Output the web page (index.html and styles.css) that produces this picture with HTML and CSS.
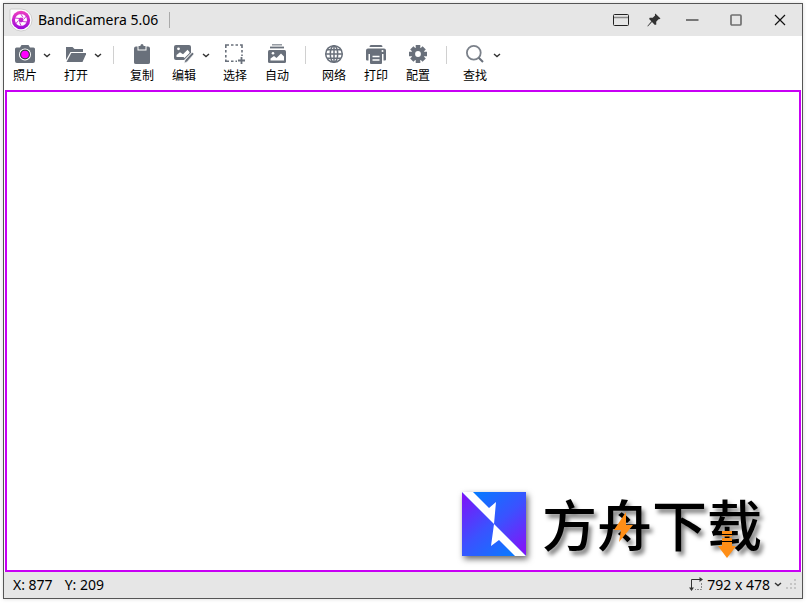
FILE: index.html
```html
<!DOCTYPE html>
<html lang="zh-CN">
<head>
  <meta charset="UTF-8">
  <meta name="viewport" content="width=device-width, initial-scale=1.0">
  <title>BandiCamera 5.06</title>
  <link rel="stylesheet" href="styles.css">
</head>
<body>
  <div class="window">
    <!-- Title bar -->
    <header class="titlebar">
      <svg class="app-icon" width="24" height="24" viewBox="0 0 24 24">
        <defs>
          <linearGradient id="app-grad" x1="0" y1="0" x2="0" y2="1">
            <stop offset="0" stop-color="#f03fc0"/>
            <stop offset="1" stop-color="#9a08dc"/>
          </linearGradient>
        </defs>
        <path d="M2 1H12A11 11 0 1 1 1 12V2Q1 1 2 1Z" fill="#fff" stroke="#c4c4c4" stroke-width=".8"/>
        <circle cx="12" cy="12" r="9.200" fill="url(#app-grad)"/>
        <circle cx="12" cy="12" r="4.200" fill="none" stroke="#fff" stroke-width="3.600"/>
        <path d="M11.500 5.500l2.500 4M17.500 8l-3 3.500M18 14l-4.500-.5M12.500 18.500l-2-4M6.500 16l3-3.500M6 10l4.500.5" stroke="#c425cf" stroke-width=".9"/>
      </svg>
      <h1>BandiCamera 5.06</h1>
      <span class="title-sep"></span>
      <div class="window-buttons">
        <button class="small" aria-label="窗口">
          <svg width="18" height="14" viewBox="0 0 18 14"><rect x="1.500" y="1.500" width="15" height="11" rx="1" fill="none" stroke="#222"/><path d="M2 4.500h14" stroke="#888" stroke-width="1.500"/></svg>
        </button>
        <button class="small" aria-label="置顶">
          <svg width="14" height="14" viewBox="0 0 14 14"><path d="M8.300.5l5.200 5-1.300.8-.7-.1-2.300 2.500.1 2.800-1.400.4-2.900-2.900L.8 13.500.4 13l4-4.700-2.300-2.300.6-1.300 3 .1 2.400-2.400-.2-1z" fill="#333"/></svg>
        </button>
        <button aria-label="最小化">
          <svg width="14" height="14" viewBox="0 0 14 14"><path d="M1 7h12.500" stroke="#777" stroke-width="2"/></svg>
        </button>
        <button aria-label="最大化">
          <svg width="14" height="14" viewBox="0 0 14 14"><rect x="2" y="2" width="10" height="10" rx="1" fill="none" stroke="#707070" stroke-width="1.700"/></svg>
        </button>
        <button aria-label="关闭">
          <svg width="14" height="14" viewBox="0 0 14 14"><path d="M2 2l10 10M12 2L2 12" stroke="#111" stroke-width="1.200"/></svg>
        </button>
      </div>
    </header>

    <!-- Toolbar -->
    <nav class="toolbar">
      <div class="split">
        <button class="tool">
          <svg viewBox="0 0 20 20"><path d="M1.500 3.500H5L6.500 1h7L15 3.500h3.500Q20 3.500 20 5v12q0 2-2 2H2q-2 0-2-2V5Q0 3.500 1.500 3.500Z" fill="#69707b"/><circle cx="10" cy="10.500" r="6" fill="#fff"/><circle cx="10" cy="10.500" r="5" fill="#333a40"/><circle cx="10" cy="10.500" r="3.800" fill="#f0f"/></svg>
          照片
        </button>
        <button class="caret" aria-label="照片选项"><svg viewBox="0 0 8 5"><path d="M1 1l3 2.500L7 1"/></svg></button>
      </div>
      <div class="split">
        <button class="tool">
          <svg viewBox="0 0 20 20"><path d="M0 3h6.500l2 2H17v3H4.500L0 16Z" fill="#69707b"/><path d="M5.300 9H20.500L16.500 18H.5Z" fill="#69707b"/></svg>
          打开
        </button>
        <button class="caret" aria-label="打开选项"><svg viewBox="0 0 8 5"><path d="M1 1l3 2.500L7 1"/></svg></button>
      </div>
      <span class="sep"></span>
      <button class="tool">
        <svg viewBox="0 0 20 20"><path d="M4 2.500h1.500v4h9v-4H16q2 0 2 2v14q0 1.500-2 1.500H4q-2 0-2-1.500v-14q0-2 2-2Z" fill="#69707b"/><path d="M6.500 2h1.800q.3-2 1.700-2t1.700 2h1.800v3.500h-7Z" fill="#69707b"/></svg>
        复制
      </button>
      <div class="split">
        <button class="tool">
          <svg viewBox="0 0 20 20"><path d="M2 1h13q2 0 2 2v6l-7 7H2q-2 0-2-2V3q0-2 2-2Z" fill="#69707b"/><circle cx="4.500" cy="4.800" r="1.400" fill="#fff"/><path d="M2.500 13v-2L6 8.300l3 2 4.500-4.500L15.500 8v1l-5 5-1-1Z" fill="#fff"/><path d="M10.200 19.300l.8-3.300 7.200-7.800 2 1.700-7.200 8Z" fill="#69707b" stroke="#fff" stroke-width=".7"/></svg>
          编辑
        </button>
        <button class="caret" aria-label="编辑选项"><svg viewBox="0 0 8 5"><path d="M1 1l3 2.500L7 1"/></svg></button>
      </div>
      <button class="tool">
        <svg viewBox="0 0 20 20"><path d="M.8 4V1H4M6 1h2.500M10.500 1H13M15 1h2v3M17 6v2.500M17 10.500v1.500M.8 6v2.500M.8 11v2.500M.8 15.500v1.700H4M6 17.200h2.500M10.500 17.200H12" fill="none" stroke="#69707b" stroke-width="1.600"/><path d="M16.500 13v7M13 16.500h7" stroke="#69707b" stroke-width="1.800"/></svg>
        选择
      </button>
      <button class="tool">
        <svg viewBox="0 0 20 20"><path d="M5 .8h10" stroke="#8c929a" stroke-width="1.400"/><path d="M3 3.500h14" stroke="#69707b" stroke-width="1.800"/><rect x="1" y="6" width="18" height="13" rx="1.500" fill="#69707b"/><circle cx="6" cy="9.200" r="1.300" fill="#fff"/><path d="M3.500 16.500v-2L7 12l2.500 2L14 9.500l3 3v4Z" fill="#fff"/></svg>
        自动
      </button>
      <span class="sep"></span>
      <button class="tool">
        <svg viewBox="0 0 20 20"><g fill="none" stroke="#69707b" stroke-width="1.500"><circle cx="10" cy="10" r="8.300"/><ellipse cx="10" cy="10" rx="3.700" ry="8.300"/><path d="M10 1.500v17M2 10h16M3 5.800h14M3 14.200h14"/></g></svg>
        网络
      </button>
      <button class="tool">
        <svg viewBox="0 0 20 20"><path d="M5 1h10q1.500 0 1.500 2h-13Q3.500 1 5 1Z" fill="#69707b"/><path d="M2 4.500h16q2 0 2 2v9q0 1-1 1h-1.500V10h-15v6.500H1q-1 0-1-1v-9q0-2 2-2Z" fill="#69707b"/><circle cx="16.500" cy="7" r="1" fill="#fff"/><path d="M5 9h10q1 0 1 1v9q0 1-1 1H5q-1 0-1-1v-9q0-1 1-1Z" fill="#69707b"/><path d="M6.500 12.500h7M6.500 16h7" stroke="#fff" stroke-width="1.600"/></svg>
        打印
      </button>
      <button class="tool">
        <svg viewBox="0 0 20 20"><g stroke="#69707b" stroke-width="4.600"><path d="M10 1v18M1 10h18M3.800 3.800l12.400 12.400M16.200 3.800L3.800 16.200"/></g><circle cx="10" cy="10" r="6.500" fill="#69707b"/><circle cx="10" cy="10" r="2.900" fill="#fff"/></svg>
        配置
      </button>
      <span class="sep"></span>
      <div class="split">
        <button class="tool">
          <svg viewBox="0 0 20 20"><circle cx="8.800" cy="8.800" r="6.900" fill="none" stroke="#7b818a" stroke-width="1.800"/><path d="M13.700 13.700l4.300 4.300" stroke="#69707b" stroke-width="2"/></svg>
          查找
        </button>
        <button class="caret" aria-label="查找选项"><svg viewBox="0 0 8 5"><path d="M1 1l3 2.500L7 1"/></svg></button>
      </div>
    </nav>

    <!-- Capture area -->
    <main class="capture">
      <div class="brand">
        <svg class="brand-mark" width="64" height="64" viewBox="0 0 64 64">
          <defs>
            <linearGradient id="mark-top" gradientUnits="userSpaceOnUse" x1="16" y1="0" x2="64" y2="54">
              <stop offset="0" stop-color="#0879ff"/>
              <stop offset=".5" stop-color="#3a52ff"/>
              <stop offset="1" stop-color="#7f18f8"/>
            </linearGradient>
            <linearGradient id="mark-bottom" gradientUnits="userSpaceOnUse" x1="0" y1="8" x2="48" y2="64">
              <stop offset="0" stop-color="#7a18f8"/>
              <stop offset=".5" stop-color="#3a52ff"/>
              <stop offset="1" stop-color="#0c78ff"/>
            </linearGradient>
          </defs>
          <rect width="64" height="64" fill="url(#mark-top)"/>
          <path d="M0 0L64 64H0Z" fill="url(#mark-bottom)"/>
          <path d="M0 0H11L27 16 34 10 32 32Z" fill="#fff"/>
          <path d="M64 64H53L37 48 29 54 32 32Z" fill="#fff"/>
        </svg>
        <div class="brand-name">
          方舟下载
          <svg class="bolt" width="20" height="30" viewBox="0 0 20 30"><path d="M12 0L0 18h7L5 30 19 13h-7Z" fill="#ff8e16"/></svg>
          <svg class="arrow" width="18" height="28" viewBox="0 0 18 28"><path d="M4 0h10v3H4ZM4 4h10v1.500H4ZM4 7h10v3H4ZM4 11h10v4h4L9 27 0 15h4Z" fill="#ff8e16"/></svg>
        </div>
      </div>
    </main>

    <!-- Status bar -->
    <footer class="statusbar">
      <span>X: 877</span>
      <span>Y: 209</span>
      <button class="size">
        <svg width="14" height="14" viewBox="0 0 14 14"><path d="M2.500 12V2.500H12" fill="none" stroke="#333"/><path d="M10.500 0l3.500 2.500L10.500 5ZM0 10.500l2.500 3.500L5 10.500Z" fill="#333"/><path d="M12.500 6v6.500H6" fill="none" stroke="#888" stroke-dasharray="2 1"/></svg>
        792 x 478
        <svg class="chevron" width="8" height="5" viewBox="0 0 8 5"><path d="M1 1l3 2.500L7 1"/></svg>
      </button>
      <svg class="grip" width="11" height="11" viewBox="0 0 11 11"><path d="M8 0h2v2H8ZM4 4h2v2H4ZM8 4h2v2H8ZM0 8h2v2H0ZM4 8h2v2H4ZM8 8h2v2H8Z" fill="#c5c5c5"/></svg>
    </footer>
  </div>
</body>
</html>
```
FILE: styles.css
```css
* {
  box-sizing: border-box;
}

body {
  margin: 0;
  padding: 3px 4px 4px 3px;
  height: 100vh;
  background: #fff;
  color: #000;
  font-family: "Noto Sans", "Noto Sans CJK SC", sans-serif;
  font-size: 14px;
}

button {
  margin: 0;
  padding: 0;
  border: none;
  background: none;
  color: inherit;
  font: inherit;
}

svg {
  display: block;
  flex: none;
}

.window {
  display: flex;
  flex-direction: column;
  height: 100%;
  border: 1px solid #555;
  box-shadow: 0 0 4px rgba(0, 0, 0, 0.15);
}

/* Title bar */
.titlebar {
  display: flex;
  align-items: center;
  height: 32px;
  padding-left: 5px;
  background: #e6e6e6;
}

.titlebar h1 {
  margin: 0 11px 0 5px;
  font-size: 14px;
  font-weight: normal;
  line-height: 20px;
}

.title-sep {
  width: 1px;
  height: 16px;
  background: #aaa;
}

.window-buttons {
  display: flex;
  margin-left: auto;
}

.window-buttons button {
  display: flex;
  align-items: center;
  justify-content: center;
  width: 44px;
  height: 32px;
}

.window-buttons .small {
  width: 33px;
}

/* Toolbar */
.toolbar {
  display: flex;
  gap: 8px;
  height: 54px;
  padding: 8px 4px 0;
  background: #fff;
}

.split {
  display: flex;
}

.tool {
  display: flex;
  flex-direction: column;
  align-items: center;
  gap: 3px;
  width: 34px;
  height: 40px;
  font-family: "Noto Sans CJK SC", sans-serif;
  font-size: 12px;
  line-height: 16px;
  white-space: nowrap;
}

.tool svg {
  width: 20px;
  height: 20px;
}

.caret {
  display: flex;
  justify-content: center;
  width: 9px;
  height: 20px;
  padding-top: 9px;
}

.caret svg {
  width: 8px;
  height: 5px;
}

.caret path,
.chevron path {
  fill: none;
  stroke: #333;
  stroke-width: 1.4;
}

.sep {
  width: 1px;
  height: 18px;
  margin: 2px 3px;
  background: #d0d0d0;
}

/* Capture area */
.capture {
  display: flex;
  flex: 1;
  align-items: flex-end;
  justify-content: flex-end;
  margin: 0 1px;
  padding: 0 37px 14px 0;
  border: 2px solid #c800f5;
}

.brand {
  display: flex;
  align-items: flex-start;
  gap: 16px;
}

.brand-mark {
  filter: drop-shadow(2px 3px 3px rgba(0, 0, 0, 0.6));
}

.brand-name {
  position: relative;
  font-family: "Noto Sans CJK SC", sans-serif;
  font-size: 55px;
  font-weight: 500;
  line-height: 60px;
  text-shadow: 3px 4px 4px rgba(0, 0, 0, 0.5);
}

.bolt {
  position: absolute;
  top: 20px;
  left: 72px;
}

.arrow {
  position: absolute;
  top: 39px;
  left: 176px;
}

/* Status bar */
.statusbar {
  display: flex;
  align-items: center;
  gap: 12px;
  height: 26px;
  padding: 0 5px 2px 9px;
  background: #e6e6e6;
}

.size {
  display: flex;
  align-items: center;
  gap: 4px;
  margin-left: auto;
}

.grip {
  margin-left: -8px;
}
```
